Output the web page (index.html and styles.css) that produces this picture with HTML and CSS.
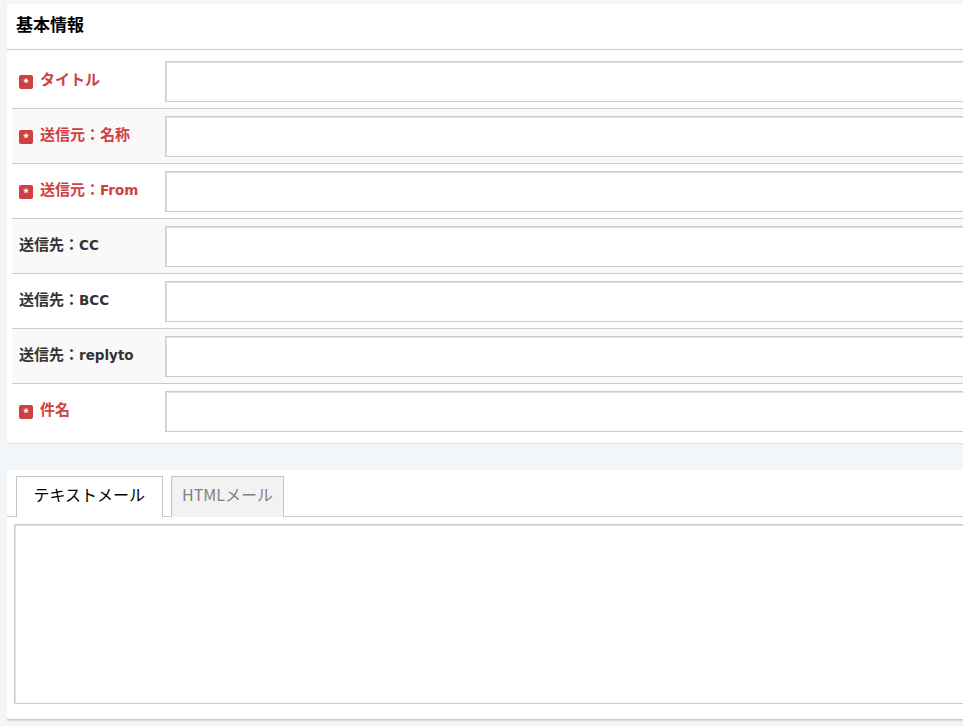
FILE: index.html
```html
<!DOCTYPE html>
<html lang="ja">
<head>
<meta charset="utf-8">
<title>基本情報</title>
<link rel="stylesheet" href="styles.css">
</head>
<body>
<main class="page">
  <section class="card info">
    <h2 class="card-title">基本情報</h2>
    <div class="rows">
      <div class="row first"><div class="label req"><span class="mark">*</span><span class="text">タイトル</span></div><div class="field"><input class="input" type="text"></div></div>
      <div class="row alt"><div class="label req"><span class="mark">*</span><span class="text">送信元：名称</span></div><div class="field"><input class="input" type="text"></div></div>
      <div class="row"><div class="label req"><span class="mark">*</span><span class="text">送信元：<span class="lat">From</span></span></div><div class="field"><input class="input" type="text"></div></div>
      <div class="row alt"><div class="label"><span class="text">送信先：<span class="lat">CC</span></span></div><div class="field"><input class="input" type="text"></div></div>
      <div class="row"><div class="label"><span class="text">送信先：<span class="lat">BCC</span></span></div><div class="field"><input class="input" type="text"></div></div>
      <div class="row alt"><div class="label"><span class="text">送信先：<span class="lat">replyto</span></span></div><div class="field"><input class="input" type="text"></div></div>
      <div class="row last"><div class="label req"><span class="mark">*</span><span class="text">件名</span></div><div class="field"><input class="input" type="text"></div></div>
    </div>
  </section>
  <section class="card mail">
    <div class="tabs">
      <div class="tab active">テキストメール</div>
      <div class="tab">HTMLメール</div>
    </div>
    <div class="editor"><textarea class="textarea"></textarea></div>
  </section>
</main>
</body>
</html>
```
FILE: styles.css
```css
* { box-sizing: border-box; }
html, body { margin: 0; height: 100%; }
body {
  background: #f3f6f9;
  overflow: hidden;
  font-family: "Noto Sans CJK JP", "Noto Sans", sans-serif;
  color: #333;
}
.page { padding: 4px 0 0 7px; width: 1100px; }
.card { background: #fff; }
.info { border-bottom: 1px solid #ddd; height: 440px; }
.card-title {
  margin: 0;
  height: 46px;
  padding: 0 9px;
  line-height: 39px;
  font-size: 17px;
  font-weight: 700;
  color: #000;
  border-bottom: 1px solid #ccc;
}
.rows { padding: 0 0 0 5px; }
.row {
  display: flex;
  height: 55px;
  padding-top: 7px;
  border-bottom: 1px solid #ccc;
}
.row.first { height: 59px; padding-top: 11px; }
.row.last { height: 59px; border-bottom: 0; }
.row.alt { background: #f9f9f9; }
.label {
  width: 153px;
  flex: none;
  display: flex;
  align-items: center;
  height: 41px;
  padding-left: 7px;
  font-size: 15px;
  font-weight: 700;
}
.label.req { color: #cf4040; }
.text { line-height: 36px; height: 36px; margin-top: -5px; white-space: nowrap; }
.lat { font-family: "DejaVu Sans", sans-serif; font-size: 13.5px; }
.mark {
  width: 14px;
  height: 14px;
  margin-right: 7px;
  border-radius: 2px;
  background: #cf4040;
  color: #fff;
  font-size: 12px;
  line-height: 16px;
  text-align: center;
}
.field { flex: 1; }
.input {
  display: block;
  width: 100%;
  height: 41px;
  margin: 0;
  padding: 0 8px;
  background: #fff;
  border: 1px solid #ccc;
  box-shadow: inset 1px 1px 0 #e0e0e0;
  outline: 0;
}
.mail { margin-top: 26px; height: 250px; border-bottom: 1px solid #ccc; box-shadow: 0 1px 1px #ddd; }
.tabs {
  display: flex;
  gap: 8px;
  height: 47px;
  padding: 6px 0 0 9px;
  border-bottom: 1px solid #ccc;
}
.tab {
  height: 41px;
  padding: 0 10.5px;
  border: 1px solid #c4c4c4;
  border-bottom: 0;
  background: #f2f2f2;
  color: #808080;
  font-size: 16px;
  line-height: 35px;
}
.tab.active {
  padding: 0 16.5px;
  background: #fff;
  color: #000;
  margin-bottom: -1px;
  height: 41px;
}
.editor { padding: 7px 0 0 7px; }
.textarea {
  display: block;
  width: 100%;
  height: 180px;
  margin: 0;
  background: #fff;
  border: 1px solid #ccc;
  box-shadow: inset 1px 1px 0 #e0e0e0;
  outline: 0;
  resize: none;
}
```
